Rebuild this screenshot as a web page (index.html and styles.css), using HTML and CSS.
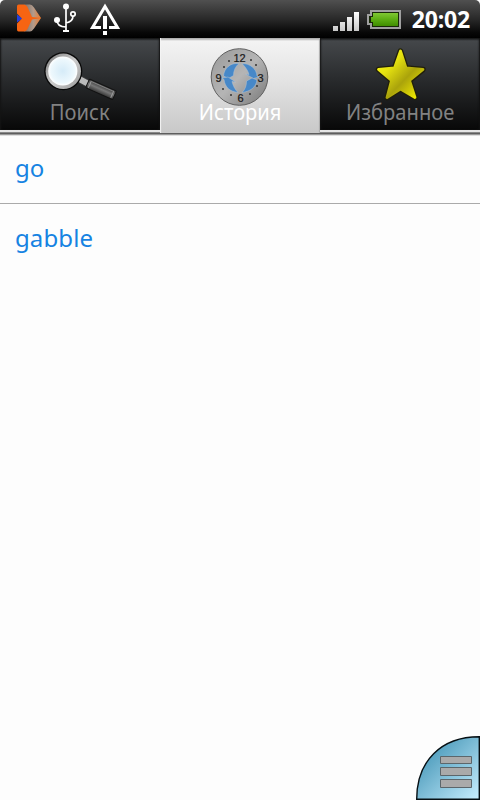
FILE: index.html
```html
<!DOCTYPE html>
<html lang="ru">
<head>
    <meta charset="UTF-8">
    <meta name="viewport" content="width=device-width, initial-scale=1.0">
    <title>История</title>
    <link rel="stylesheet" href="styles.css">
</head>
<body>
    <div class="screen">
        <div class="status-bar">
            <svg class="status-icons" width="130" height="38" viewBox="0 0 130 38">
                <defs>
                    <linearGradient id="arrow">
                        <stop offset="0" stop-color="#77706d"/>
                        <stop offset=".55" stop-color="#b39b8b"/>
                        <stop offset="1" stop-color="#ed7a2c"/>
                    </linearGradient>
                </defs>
                <path d="M24 4.500h6q2 0 4 3l7 10.500-7 10.500q-2 3-4 3h-6l6-13.500z" fill="url(#arrow)"/>
                <path d="M17 14.500l5.500 4-5.500 4z" fill="#233fdd"/>
                <path d="M18.500 4.500h5.500q2 0 3.500 2.500L32 17l9 1-9 1.500-4.500 9.500q-1.500 2.500-3.500 2.500h-5.500q-1.500 0-1.500-2v-6l5-5-5-5V6.500q0-2 1.500-2z" fill="#f66412"/>
                <g fill="none" stroke="#fff" stroke-width="1.7">
                    <path d="M66 6v25M57 20c0 5 3 7 9 7M73 16c0 4-2 6-7 7"/>
                    <circle cx="73" cy="14" r="2.2"/>
                </g>
                <g fill="#fff">
                    <circle cx="66" cy="6.5" r="3"/>
                    <circle cx="57" cy="20" r="3"/>
                    <path d="M63 30h6v2h-6z"/>
                </g>
                <path d="M101 27.500H92.500L105 6.500l12.500 21H109" fill="none" stroke="#fff" stroke-width="3"/>
                <path d="M103 16h4v13h-4zM103 31h4v4h-4z" fill="#fff"/>
            </svg>
            <div class="status-right">
                <svg width="72" height="38" viewBox="0 0 72 38">
                    <defs>
                        <linearGradient id="bars" x2="0" y2="1">
                            <stop offset="0" stop-color="#fff"/>
                            <stop offset="1" stop-color="#c8c8c8"/>
                        </linearGradient>
                        <linearGradient id="battery" x2="0" y2="1">
                            <stop offset="0" stop-color="#80c834"/>
                            <stop offset=".5" stop-color="#5cad13"/>
                            <stop offset="1" stop-color="#3f8d00"/>
                        </linearGradient>
                    </defs>
                    <path d="M3 26h5v5H3zM10 22h5v9h-5zM17 17h5v14h-5zM24 12h5v19h-5z" fill="url(#bars)"/>
                    <path d="M41 11h29v17H41v-4h-3v-9h3z" fill="#182808" stroke="#a0a0a0" stroke-width="2"/>
                    <path d="M43 13h25v13H43v-4h-2v-5h2z" fill="url(#battery)"/>
                </svg>
                <span class="clock">20:02</span>
            </div>
        </div>

        <div class="tabs">
            <div class="tab">
                <svg class="tab-icon" width="160" height="92" viewBox="0 0 160 92">
                    <defs>
                        <radialGradient id="lens">
                            <stop offset="0" stop-color="#d5ebf8"/>
                            <stop offset=".8" stop-color="#edf8fd"/>
                            <stop offset="1" stop-color="#fff"/>
                        </radialGradient>
                        <linearGradient id="rim" x2="1" y2="1">
                            <stop offset="0" stop-color="#777"/>
                            <stop offset=".5" stop-color="#ccc"/>
                            <stop offset="1" stop-color="#999"/>
                        </linearGradient>
                        <linearGradient id="handle" x2="0" y2="1">
                            <stop offset="0" stop-color="#333"/>
                            <stop offset=".5" stop-color="#777"/>
                            <stop offset="1" stop-color="#333"/>
                        </linearGradient>
                    </defs>
                    <path d="M79 37l11 6-3 6-11-6z" fill="#bbb" stroke="#333" stroke-width=".7"/>
                    <g transform="translate(89.500 41) rotate(24)">
                        <rect width="29.500" height="9.500" rx="1" fill="url(#handle)" stroke="#111"/>
                        <path d="M2.500 1v7.500M27 1v7.500" stroke="#999"/>
                        <path d="M3 1.500h24" stroke="#888"/>
                    </g>
                    <circle cx="63.300" cy="33.300" r="19" fill="#080808"/>
                    <circle cx="63.300" cy="33.300" r="17.700" fill="url(#rim)"/>
                    <circle cx="62.800" cy="33" r="14.600" fill="url(#lens)"/>
                </svg>
                <span class="tab-label search-label">Поиск</span>
            </div>
            <div class="tab selected">
                <svg class="tab-icon" width="160" height="92" viewBox="0 0 160 92">
                    <defs>
                        <linearGradient id="dial" x2="1" y2="1">
                            <stop offset="0" stop-color="#999"/>
                            <stop offset=".5" stop-color="#b5b5b5"/>
                            <stop offset="1" stop-color="#777"/>
                        </linearGradient>
                    </defs>
                    <circle cx="79.500" cy="39" r="28.300" fill="url(#dial)" stroke="#606060"/>
                    <g fill="#4788c8" stroke="#b5c5d5" stroke-width=".5">
                        <path d="M79 25.500c-9-1-15 5-15.500 12.500l5 2.500 5-3c0-5 2-9 5.500-12z"/>
                        <path d="M82 25.500c8 0 14.500 5 15 12.500l2 1-5.500 1.500-8-4.500 3.500.5c-1-4-4-8-7-11z"/>
                        <path d="M78 54.500c-8-1-13-5-14-13l-2-1.500 6-1 7.500 5-3.500-.5c1 4 3 8 6 11z"/>
                        <path d="M82 54.500c8-1 14-5 15-12.500l-5-2-5.500 3c0 5-1.500 8.500-4.500 11.500z"/>
                    </g>
                    <g class="dial-numbers">
                        <text x="79.500" y="23.500">12</text>
                        <text x="100.500" y="43.500">3</text>
                        <text x="80.500" y="64">6</text>
                        <text x="58.500" y="43.500">9</text>
                    </g>
                    <g fill="#333">
                        <circle cx="69" cy="23" r="1"/>
                        <circle cx="91" cy="22" r="1"/>
                        <circle cx="64" cy="29" r="1"/>
                        <circle cx="96" cy="27" r="1"/>
                        <circle cx="63" cy="51" r="1"/>
                        <circle cx="71" cy="57" r="1"/>
                        <circle cx="90" cy="56" r="1"/>
                        <circle cx="97" cy="48" r="1"/>
                    </g>
                </svg>
                <span class="tab-label">История</span>
            </div>
            <div class="tab">
                <svg class="tab-icon" width="160" height="92" viewBox="0 0 160 92">
                    <defs>
                        <linearGradient id="star" x2="1" y2="1">
                            <stop offset="0" stop-color="#ffff16"/>
                            <stop offset=".3" stop-color="#e6e210"/>
                            <stop offset=".6" stop-color="#aaa30b"/>
                            <stop offset="1" stop-color="#fff900"/>
                        </linearGradient>
                    </defs>
                    <path d="M80.500 13l5.500 17 17 1.500-13.500 11 5.500 17L80.500 51 67 59.500l4.500-17L58.500 31.500l16-1.500z" fill="#211f0a" stroke="#211f0a" stroke-width="5.500" stroke-linejoin="round"/>
                    <path d="M80.500 13l5.500 17 17 1.500-13.500 11 5.500 17L80.500 51 67 59.500l4.500-17L58.500 31.500l16-1.500z" fill="url(#star)" stroke="url(#star)" stroke-width="2.800" stroke-linejoin="round"/>
                </svg>
                <span class="tab-label favorites-label">Избранное</span>
            </div>
        </div>

        <div class="history">
            <div class="history-item">go</div>
            <div class="history-item">gabble</div>
        </div>

        <svg class="menu-button" width="64" height="64" viewBox="0 0 64 64">
            <defs>
                <linearGradient id="corner" x2="1" y2="1">
                    <stop offset=".15" stop-color="#459abb"/>
                    <stop offset=".35" stop-color="#64abc8"/>
                    <stop offset="1" stop-color="#c8efff"/>
                </linearGradient>
            </defs>
            <path d="M.7 63.300C.7 25 25 .7 63.300 .7v62.600z" fill="url(#corner)" stroke="#071014" stroke-width="1.400"/>
            <path d="M24.500 20.500h31v7h-31zM24.500 31.500h31v8h-31zM24.500 43.500h31v8h-31z" fill="#aaa" stroke="#5c666b"/>
        </svg>
    </div>
</body>
</html>
```

FILE: styles.css
```css
body {
    margin: 0;
    background-color: #fdfdfd;
    font-family: "Noto Sans", sans-serif;
}
.screen {
    position: relative;
    height: 800px;
    overflow: hidden;
}
.status-bar {
    display: flex;
    justify-content: space-between;
    height: 38px;
    background: linear-gradient(#505050, #292929 50%, #080808 85%, #000);
    border-radius: 5px 5px 0 0;
}
.status-right {
    display: flex;
    padding-right: 10px;
}
.status-right svg {
    margin-right: 10px;
}
.clock {
    color: #fff;
    font: bold 23px/39px "Open Sans", sans-serif;
    letter-spacing: -0.2px;
}
.tabs {
    display: grid;
    grid-template-columns: repeat(3, 160px);
    height: 98px;
    box-sizing: border-box;
    background: linear-gradient(#e5e5e5 94px, #bbb 94px, #555 95px, #666 96px, #ccc 97px, #f0f0f0);
}
.tab {
    display: flex;
    flex-direction: column;
    align-items: center;
    height: 92px;
    background: linear-gradient(#191a1b, #44474a 3px, #292b2d 45%, #080808);
    box-shadow: inset 1px 0 2px #151515, inset -1px 0 2px #111;
    color: #828282;
}
.selected {
    height: 95px;
    background: linear-gradient(#999, #f3f3f3 3px, #e3e3e3 45%, #c8c8c8);
    box-shadow: inset 1px 0 1px #f4f4f4, inset -1px 0 1px #aaa;
    color: #fff;
}
.tab-icon {
    flex-shrink: 0;
}
.tab-label {
    margin-top: -34px;
    font-size: 22px;
    line-height: 30px;
    transform: scaleX(0.915);
    z-index: 1;
}
.dial-numbers {
    font: 11px "Liberation Sans", sans-serif;
    text-anchor: middle;
    fill: #181818;
    stroke: #181818;
    stroke-width: 0.2px;
}
.history-item {
    height: 69px;
    padding: 0 15px;
    color: #1683e2;
    font-size: 24px;
    line-height: 64px;
    letter-spacing: 0.1px;
    border-bottom: 1px solid #aaa;
}
.history-item:first-child {
    height: 67px;
}
.history-item:last-child {
    border-bottom: none;
    line-height: 68px;
}
.menu-button {
    position: absolute;
    right: 0;
    bottom: 0;
}
```
